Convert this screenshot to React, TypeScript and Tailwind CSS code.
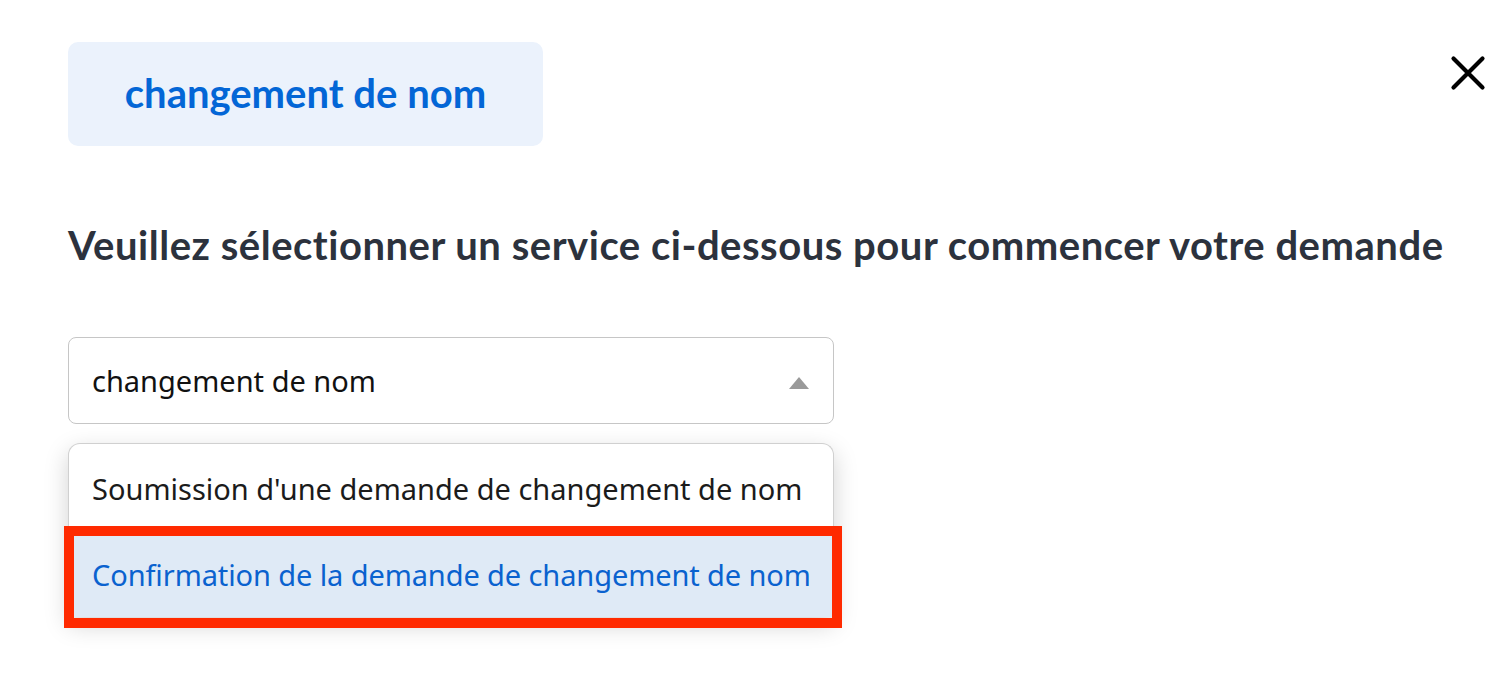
const OPTIONS = [
  "Soumission d'une demande de changement de nom",
  'Confirmation de la demande de changement de nom',
]

export default function App() {
  return (
    <div className="relative w-[1502px] h-[696px] bg-white overflow-hidden font-['Lato',sans-serif]">
      <button className="absolute left-[1450px] top-[55px] text-black">
        <svg width="36" height="36" viewBox="0 0 36 36" fill="none" stroke="currentColor" strokeWidth="4.2" strokeLinecap="round">
          <path d="M3.5 3.5L32.5 32.5M32.5 3.5L3.5 32.5" />
        </svg>
      </button>

      <div className="pl-[68px] pt-[42px]">
        <div className="w-[475px] h-[104px] rounded-[10px] bg-[#ebf2fc] flex items-center justify-center">
          <span className="text-[40px] font-bold text-[#0366d6] leading-none pb-[2px]">changement de nom</span>
        </div>

        <h2 className="mt-[75px] text-[40px] leading-[48px] font-bold text-[#2c323d] tracking-[0.52px]">
          Veuillez sélectionner un service ci-dessous pour commencer votre demande
        </h2>

        <div className="mt-[68px] w-[766px] font-['Noto_Sans',sans-serif]">
          <div className="h-[87px] rounded-[8px] border border-[#c6c6c6] flex items-center justify-between pl-[23px] pr-[24px]">
            <span className="text-[29px] text-[#111]">changement de nom</span>
            <span className="mt-[4px] w-0 h-0 border-l-[10px] border-r-[10px] border-b-[12px] border-l-transparent border-r-transparent border-b-[#9a9a9a]" />
          </div>

          <div className="relative mt-[19px] rounded-t-[12px] border border-[#d0d0d0] border-b-0 bg-white shadow-[0_8px_24px_rgba(0,0,0,0.18)]">
            <div className="h-[89px] flex items-center pl-[23px] text-[29px] text-[#1b1b1b]">{OPTIONS[0]}</div>
            <div className="h-[84px] flex items-center pl-[23px] text-[29px] text-[#0a62cf] bg-[#dfeaf6] tracking-[-0.1px]">{OPTIONS[1]}</div>
            <div className="absolute left-[-5px] right-[-9px] top-[82px] h-[102px] border-[10px] border-[#ff2a00]" />
          </div>
        </div>
      </div>
    </div>
  )
}
